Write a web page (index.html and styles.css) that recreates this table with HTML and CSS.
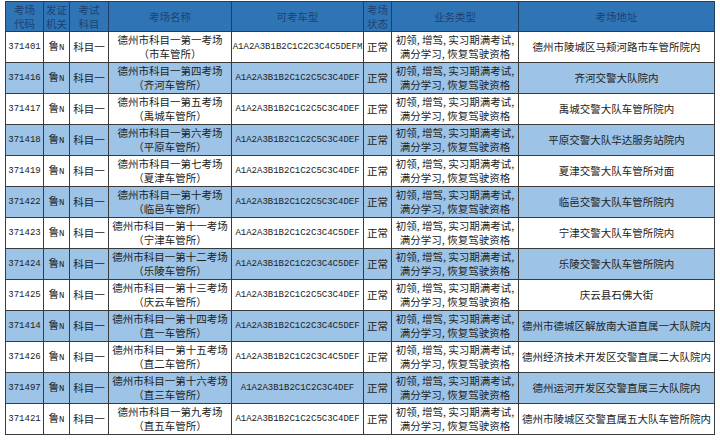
FILE: index.html
```html
<!DOCTYPE html>
<html lang="zh-CN">
<head>
<meta charset="utf-8">
<title>考场信息</title>
<link rel="stylesheet" href="styles.css">
</head>
<body>
<table class="sheet">
  <colgroup>
    <col class="c-code"><col class="c-org"><col class="c-subj"><col class="c-name"><col class="c-type"><col class="c-state"><col class="c-biz"><col class="c-addr">
  </colgroup>
  <thead>
    <tr class="head">
      <th>考场<br>代码</th>
      <th>发证<br>机关</th>
      <th>考试<br>科目</th>
      <th>考场名称</th>
      <th>可考车型</th>
      <th>考场<br>状态</th>
      <th>业务类型</th>
      <th>考场地址</th>
    </tr>
  </thead>
  <tbody>
    <tr class="w">
      <td class="mono">371401</td><td>鲁<span class="mono">N</span></td><td>科目一</td>
      <td>德州市科目一第一考场<br>（市车管所）</td>
      <td class="mono">A1A2A3B1B2C1C2C3C4C5DEFM</td><td>正常</td>
      <td>初领, 增驾, 实习期满考试,<br>满分学习, 恢复驾驶资格</td>
      <td>德州市陵城区马颊河路市车管所院内</td>
    </tr>
    <tr class="b">
      <td class="mono">371416</td><td>鲁<span class="mono">N</span></td><td>科目一</td>
      <td>德州市科目一第四考场<br>（齐河车管所）</td>
      <td class="mono">A1A2A3B1B2C1C2C5C3C4DEF</td><td>正常</td>
      <td>初领, 增驾, 实习期满考试,<br>满分学习, 恢复驾驶资格</td>
      <td>齐河交警大队院内</td>
    </tr>
    <tr class="w">
      <td class="mono">371417</td><td>鲁<span class="mono">N</span></td><td>科目一</td>
      <td>德州市科目一第五考场<br>（禹城车管所）</td>
      <td class="mono">A1A2A3B1B2C1C2C5C3C4DEF</td><td>正常</td>
      <td>初领, 增驾, 实习期满考试,<br>满分学习, 恢复驾驶资格</td>
      <td>禹城交警大队车管所院内</td>
    </tr>
    <tr class="b">
      <td class="mono">371418</td><td>鲁<span class="mono">N</span></td><td>科目一</td>
      <td>德州市科目一第六考场<br>（平原车管所）</td>
      <td class="mono">A1A2A3B1B2C1C2C5C3C4DEF</td><td>正常</td>
      <td>初领, 增驾, 实习期满考试,<br>满分学习, 恢复驾驶资格</td>
      <td>平原交警大队华达服务站院内</td>
    </tr>
    <tr class="w">
      <td class="mono">371419</td><td>鲁<span class="mono">N</span></td><td>科目一</td>
      <td>德州市科目一第七考场<br>（夏津车管所）</td>
      <td class="mono">A1A2A3B1B2C1C2C5C3C4DEF</td><td>正常</td>
      <td>初领, 增驾, 实习期满考试,<br>满分学习, 恢复驾驶资格</td>
      <td>夏津交警大队车管所对面</td>
    </tr>
    <tr class="b">
      <td class="mono">371422</td><td>鲁<span class="mono">N</span></td><td>科目一</td>
      <td>德州市科目一第十考场<br>（临邑车管所）</td>
      <td class="mono">A1A2A3B1B2C1C2C5C3C4DEF</td><td>正常</td>
      <td>初领, 增驾, 实习期满考试,<br>满分学习, 恢复驾驶资格</td>
      <td>临邑交警大队车管所院内</td>
    </tr>
    <tr class="w">
      <td class="mono">371423</td><td>鲁<span class="mono">N</span></td><td>科目一</td>
      <td>德州市科目一第十一考场<br>（宁津车管所）</td>
      <td class="mono">A1A2A3B1B2C1C2C3C4C5DEF</td><td>正常</td>
      <td>初领, 增驾, 实习期满考试,<br>满分学习, 恢复驾驶资格</td>
      <td>宁津交警大队车管所院内</td>
    </tr>
    <tr class="b">
      <td class="mono">371424</td><td>鲁<span class="mono">N</span></td><td>科目一</td>
      <td>德州市科目一第十二考场<br>（乐陵车管所）</td>
      <td class="mono">A1A2A3B1B2C1C2C3C4C5DEF</td><td>正常</td>
      <td>初领, 增驾, 实习期满考试,<br>满分学习, 恢复驾驶资格</td>
      <td>乐陵交警大队车管所院内</td>
    </tr>
    <tr class="w">
      <td class="mono">371425</td><td>鲁<span class="mono">N</span></td><td>科目一</td>
      <td>德州市科目一第十三考场<br>（庆云车管所）</td>
      <td class="mono">A1A2A3B1B2C1C2C5C3C4DEF</td><td>正常</td>
      <td>初领, 增驾, 实习期满考试,<br>满分学习, 恢复驾驶资格</td>
      <td>庆云县石佛大街</td>
    </tr>
    <tr class="b">
      <td class="mono">371414</td><td>鲁<span class="mono">N</span></td><td>科目一</td>
      <td>德州市科目一第十四考场<br>（直一车管所）</td>
      <td class="mono">A1A2A3B1B2C1C2C3C4C5DEF</td><td>正常</td>
      <td>初领, 增驾, 实习期满考试,<br>满分学习, 恢复驾驶资格</td>
      <td>德州市德城区解放南大道直属一大队院内</td>
    </tr>
    <tr class="w">
      <td class="mono">371426</td><td>鲁<span class="mono">N</span></td><td>科目一</td>
      <td>德州市科目一第十五考场<br>（直二车管所）</td>
      <td class="mono">A1A2A3B1B2C1C2C3C4C5DEF</td><td>正常</td>
      <td>初领, 增驾, 实习期满考试,<br>满分学习, 恢复驾驶资格</td>
      <td>德州经济技术开发区交警直属二大队院内</td>
    </tr>
    <tr class="b">
      <td class="mono">371497</td><td>鲁<span class="mono">N</span></td><td>科目一</td>
      <td>德州市科目一第十六考场<br>（直三车管所）</td>
      <td class="mono">A1A2A3B1B2C1C2C3C4DEF</td><td>正常</td>
      <td>初领, 增驾, 实习期满考试,<br>满分学习, 恢复驾驶资格</td>
      <td>德州运河开发区交警直属三大队院内</td>
    </tr>
    <tr class="w">
      <td class="mono">371421</td><td>鲁<span class="mono">N</span></td><td>科目一</td>
      <td>德州市科目一第九考场<br>（直五车管所）</td>
      <td class="mono">A1A2A3B1B2C1C2C5C3C4DEF</td><td>正常</td>
      <td>初领, 增驾, 实习期满考试,<br>满分学习, 恢复驾驶资格</td>
      <td>德州市陵城区交警直属五大队车管所院内</td>
    </tr>
  </tbody>
</table>
</body>
</html>
```

FILE: styles.css
```css
html, body {
  margin: 0;
  padding: 0;
  background: #ffffff;
}

body {
  padding: 1px 0 0 5px;
  font-family: "Noto Sans CJK SC", "Noto Sans", sans-serif;
  color: #222222;
}

.sheet {
  table-layout: fixed;
  border-collapse: collapse;
  width: 709px;
}

.c-code { width: 38px; }
.c-org { width: 26px; }
.c-subj { width: 39px; }
.c-name { width: 123px; }
.c-type { width: 132px; }
.c-state { width: 28px; }
.c-biz { width: 127px; }
.c-addr { width: 196px; }

.sheet th,
.sheet td {
  border: 1px solid #3a3a3a;
  padding: 0;
  text-align: center;
  vertical-align: middle;
  font-size: 10.5px;
  line-height: 14px;
  white-space: nowrap;
  overflow: hidden;
}

.head th {
  height: 29px;
  background: #2f75b6;
  color: #1f4270;
  font-weight: normal;
  font-size: 10.5px;
  line-height: 14px;
  border-color: #1f3f66;
}

.sheet tbody td {
  height: 30px;
}

.w td { background: #ffffff; }
.b td { background: #9dc3e6; }

.mono {
  font-family: "Liberation Mono", "Courier New", monospace;
  font-size: 9px;
}

td.mono { font-size: 9px; }
```
